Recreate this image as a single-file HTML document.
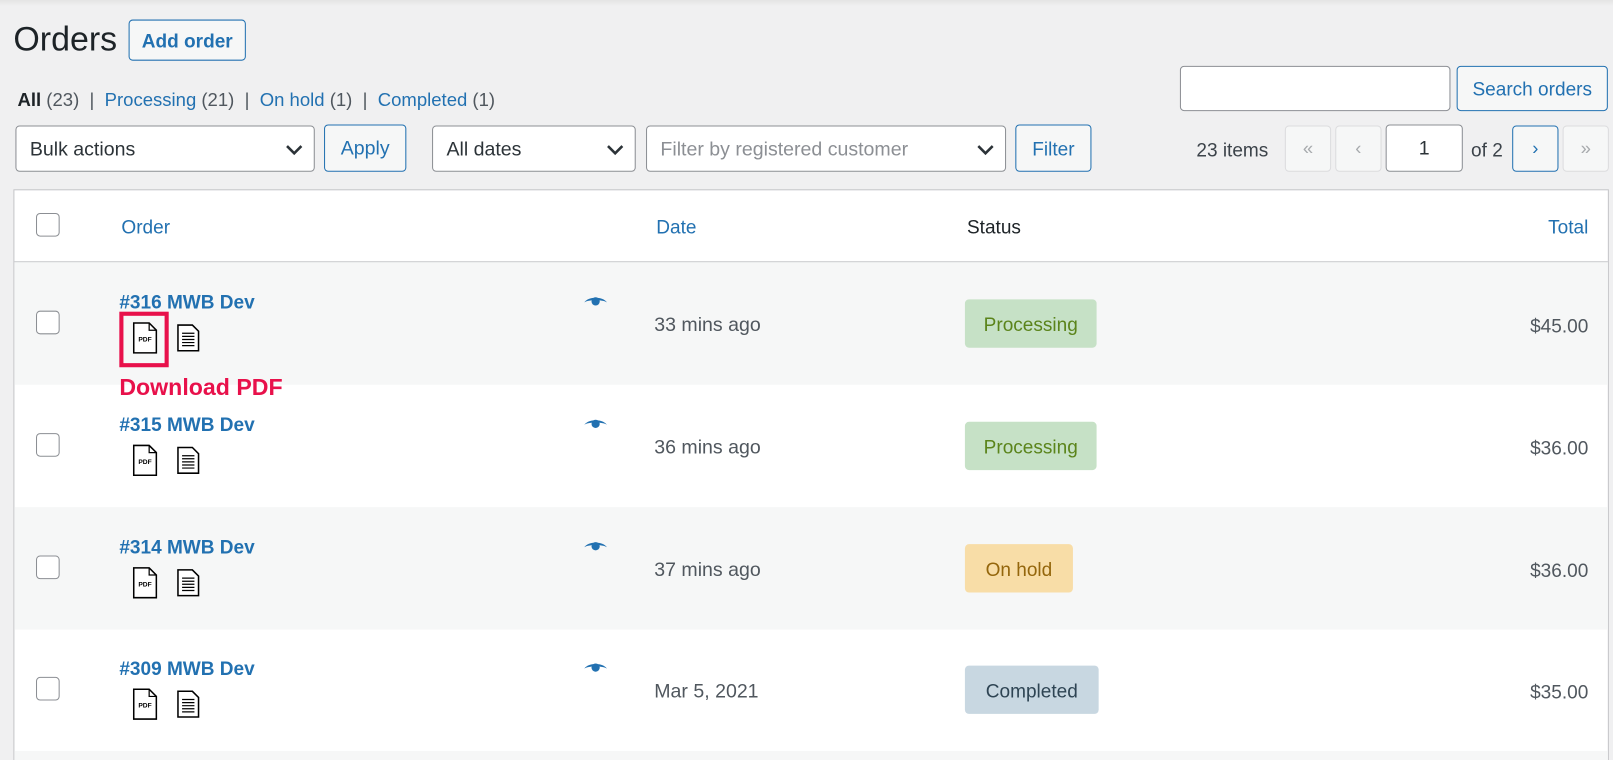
<!DOCTYPE html>
<html><head><meta charset="utf-8"><style>
*{box-sizing:border-box;margin:0;padding:0}
html,body{width:1613px;height:760px;overflow:hidden}
body{background:#f0f0f1;font-family:"Liberation Sans",sans-serif;color:#3c434a;position:relative;font-size:18px}
#w{position:absolute;left:0;top:0;width:1568px;height:739px;overflow:hidden;transform:scale(1.0287);transform-origin:0 0}
.a{position:absolute;white-space:nowrap}
.blue{color:#2271b1}
.btn{position:absolute;border:1px solid #2271b1;border-radius:4px;background:#f6f7f7;color:#2271b1;display:flex;align-items:center;justify-content:center;font-size:18.5px;padding-top:2px}
.sel{position:absolute;border:1px solid #8c8f94;border-radius:4px;background:#fff;display:flex;align-items:center;padding-left:13px;padding-top:3px;font-size:19px;color:#2c3338}
.sel svg{position:absolute;right:10px;top:50%;margin-top:-5px}
.pg{position:absolute;border:1px solid #dcdcde;border-radius:4px;background:#f6f7f7;color:#a7aaad;display:flex;align-items:center;justify-content:center;font-size:18px;top:122px;width:45px;height:45px}
.table{position:absolute;left:13px;top:184px;width:1551px;height:560px;background:#fff;border:1px solid #c3c4c7}
.row{position:absolute;left:0;width:1549px;height:119px}
.g{background:#f6f7f7}
.cb{position:absolute;left:21px;width:23px;height:23px;border:1px solid #8c8f94;border-radius:4px;background:#fff}
.ord{position:absolute;left:102px;top:28px;font-weight:bold;color:#2271b1;font-size:18.5px}
.date{position:absolute;left:622px;top:51px;font-size:19px;color:#50575e}
.st{position:absolute;left:924px;top:36px;height:47px;border-radius:4px;display:flex;align-items:center;justify-content:center;font-size:18.5px;padding-top:2px}
.p{width:128px;background:#c6e1c6;color:#5b841b}
.h{width:105px;background:#f8dda7;color:#94660c}
.c{width:130px;background:#c8d7e1;color:#2e4453}
.tot{position:absolute;right:19px;top:51px;font-size:18.5px;color:#50575e}
.eye{position:absolute;left:553px;top:32px}
.ic{position:absolute;left:115px;top:58px}
.ic2{position:absolute;left:158px;top:60px}
</style></head><body><div id="w">
<div class="a" style="left:0;top:0;width:1568px;height:6px;background:linear-gradient(#e4e4e4,#f0f0f1)"></div>
<div class="a" style="left:13px;top:19px;font-size:33px;color:#1d2327">Orders</div>
<div class="btn" style="left:125px;top:19px;width:114px;height:40px;font-weight:bold">Add order</div>
<div class="a" style="left:17px;top:87px;font-size:18px;color:#50575e"><span style="color:#1d2327;font-weight:bold">All</span> (23) &nbsp;| &nbsp;<span class="blue">Processing</span> (21) &nbsp;| &nbsp;<span class="blue">On hold</span> (1) &nbsp;| &nbsp;<span class="blue">Completed</span> (1)</div>
<div class="a" style="left:1147px;top:64px;width:263px;height:44px;background:#fff;border:1px solid #8c8f94;border-radius:4px"></div>
<div class="btn" style="left:1416px;top:64px;width:147px;height:44px">Search orders</div>
<div class="sel" style="left:15px;top:122px;width:291px;height:45px">Bulk actions<svg width="18" height="12"><path d="M2 2l7 7 7-7" stroke="#2c3338" stroke-width="2.5" fill="none"/></svg></div>
<div class="btn" style="left:315px;top:121px;width:80px;height:46px;font-size:19px">Apply</div>
<div class="sel" style="left:420px;top:122px;width:198px;height:45px">All dates<svg width="18" height="12"><path d="M2 2l7 7 7-7" stroke="#2c3338" stroke-width="2.5" fill="none"/></svg></div>
<div class="sel" style="left:628px;top:122px;width:350px;height:45px;color:#8c8f94">Filter by registered customer<svg width="18" height="12"><path d="M2 2l7 7 7-7" stroke="#2c3338" stroke-width="2.5" fill="none"/></svg></div>
<div class="btn" style="left:987px;top:121px;width:74px;height:46px">Filter</div>
<div class="a" style="left:1163px;top:135px;font-size:18.5px">23 items</div>
<div class="pg" style="left:1249px">«</div>
<div class="pg" style="left:1298px">‹</div>
<div class="a" style="left:1347px;top:121px;width:75px;height:46px;background:#fff;border:1px solid #8c8f94;border-radius:4px;display:flex;align-items:center;justify-content:center;font-size:19px;color:#2c3338;padding-top:2px">1</div>
<div class="a" style="left:1430px;top:135px;font-size:18.5px">of 2</div>
<div class="pg" style="left:1470px;border-color:#2271b1;color:#2271b1">›</div>
<div class="pg" style="left:1519px">»</div>
<div class="table">
 <div class="a" style="left:0;top:0;width:1549px;height:70px;border-bottom:1px solid #c3c4c7"></div>
 <div class="cb" style="top:22px"></div>
 <div class="a blue" style="left:104px;top:25px;font-size:18.5px">Order</div>
 <div class="a blue" style="left:624px;top:25px;font-size:18.5px">Date</div>
 <div class="a" style="left:926px;top:25px;color:#1d2327;font-size:18.5px">Status</div>
 <div class="a blue" style="right:19px;top:25px;font-size:18.5px">Total</div>

 <div class="row g" style="top:70px">
  <div class="cb" style="top:47px"></div>
  <div class="ord">#316 MWB Dev</div>
  <svg class="ic" width="24" height="31" viewBox="0 0 24 31"><path d="M1 1h15l7 7v22H1z" fill="#fff" stroke="#000" stroke-width="1.5"/><path d="M16 1v7h7" fill="none" stroke="#000" stroke-width="1.2"/><text x="12" y="19" font-size="6.5" font-weight="bold" text-anchor="middle" font-family="Liberation Sans">PDF</text></svg>
  <svg class="ic2" width="22" height="27" viewBox="0 0 22 27"><path d="M1 1h14l6 6v19H1z" fill="#fff" stroke="#000" stroke-width="1.5"/><path d="M5 9h12M5 12h12M5 15h12M5 18h12M5 21h12" stroke="#000" stroke-width="1.2"/></svg>
  <svg class="eye" width="24" height="12" viewBox="0 0 24 12"><path d="M1 7C5 1 19 1 23 7C19 4 5 4 1 7z" fill="#2271b1"/><circle cx="12" cy="6" r="4" fill="#2271b1"/></svg>
  <div class="date">33 mins ago</div>
  <div class="st p">Processing</div>
  <div class="tot">$45.00</div>
 </div>
 <div class="row" style="top:189px">
  <div class="cb" style="top:47px"></div>
  <div class="ord">#315 MWB Dev</div>
  <svg class="ic" width="24" height="31" viewBox="0 0 24 31"><path d="M1 1h15l7 7v22H1z" fill="#fff" stroke="#000" stroke-width="1.5"/><path d="M16 1v7h7" fill="none" stroke="#000" stroke-width="1.2"/><text x="12" y="19" font-size="6.5" font-weight="bold" text-anchor="middle" font-family="Liberation Sans">PDF</text></svg>
  <svg class="ic2" width="22" height="27" viewBox="0 0 22 27"><path d="M1 1h14l6 6v19H1z" fill="#fff" stroke="#000" stroke-width="1.5"/><path d="M5 9h12M5 12h12M5 15h12M5 18h12M5 21h12" stroke="#000" stroke-width="1.2"/></svg>
  <svg class="eye" width="24" height="12" viewBox="0 0 24 12"><path d="M1 7C5 1 19 1 23 7C19 4 5 4 1 7z" fill="#2271b1"/><circle cx="12" cy="6" r="4" fill="#2271b1"/></svg>
  <div class="date">36 mins ago</div>
  <div class="st p">Processing</div>
  <div class="tot">$36.00</div>
 </div>
 <div class="row g" style="top:308px">
  <div class="cb" style="top:47px"></div>
  <div class="ord">#314 MWB Dev</div>
  <svg class="ic" width="24" height="31" viewBox="0 0 24 31"><path d="M1 1h15l7 7v22H1z" fill="#fff" stroke="#000" stroke-width="1.5"/><path d="M16 1v7h7" fill="none" stroke="#000" stroke-width="1.2"/><text x="12" y="19" font-size="6.5" font-weight="bold" text-anchor="middle" font-family="Liberation Sans">PDF</text></svg>
  <svg class="ic2" width="22" height="27" viewBox="0 0 22 27"><path d="M1 1h14l6 6v19H1z" fill="#fff" stroke="#000" stroke-width="1.5"/><path d="M5 9h12M5 12h12M5 15h12M5 18h12M5 21h12" stroke="#000" stroke-width="1.2"/></svg>
  <svg class="eye" width="24" height="12" viewBox="0 0 24 12"><path d="M1 7C5 1 19 1 23 7C19 4 5 4 1 7z" fill="#2271b1"/><circle cx="12" cy="6" r="4" fill="#2271b1"/></svg>
  <div class="date">37 mins ago</div>
  <div class="st h">On hold</div>
  <div class="tot">$36.00</div>
 </div>
 <div class="row" style="top:426px">
  <div class="cb" style="top:47px"></div>
  <div class="ord">#309 MWB Dev</div>
  <svg class="ic" width="24" height="31" viewBox="0 0 24 31"><path d="M1 1h15l7 7v22H1z" fill="#fff" stroke="#000" stroke-width="1.5"/><path d="M16 1v7h7" fill="none" stroke="#000" stroke-width="1.2"/><text x="12" y="19" font-size="6.5" font-weight="bold" text-anchor="middle" font-family="Liberation Sans">PDF</text></svg>
  <svg class="ic2" width="22" height="27" viewBox="0 0 22 27"><path d="M1 1h14l6 6v19H1z" fill="#fff" stroke="#000" stroke-width="1.5"/><path d="M5 9h12M5 12h12M5 15h12M5 18h12M5 21h12" stroke="#000" stroke-width="1.2"/></svg>
  <svg class="eye" width="24" height="12" viewBox="0 0 24 12"><path d="M1 7C5 1 19 1 23 7C19 4 5 4 1 7z" fill="#2271b1"/><circle cx="12" cy="6" r="4" fill="#2271b1"/></svg>
  <div class="date">Mar 5, 2021</div>
  <div class="st c">Completed</div>
  <div class="tot">$35.00</div>
 </div>
 <div class="row g" style="top:545px;height:14px"></div>
</div>
<div class="a" style="left:116px;top:364px;color:#e8114b;font-weight:bold;font-size:22.5px">Download PDF</div>
<div class="a" style="left:116px;top:303px;width:48px;height:54px;border:4px solid #e8114b"></div>
</div></body></html>
